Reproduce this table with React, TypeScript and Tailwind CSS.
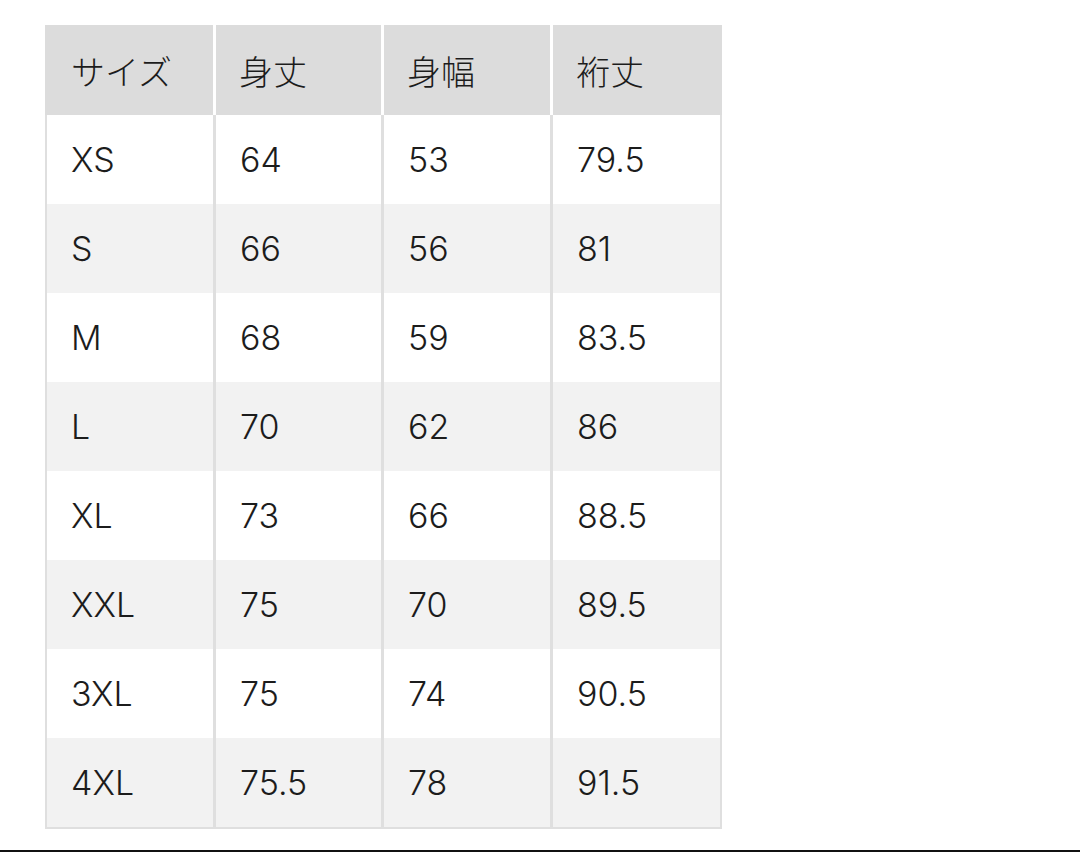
import React from "react";

const rows: string[][] = [
  ["XS", "64", "53", "79.5"],
  ["S", "66", "56", "81"],
  ["M", "68", "59", "83.5"],
  ["L", "70", "62", "86"],
  ["XL", "73", "66", "88.5"],
  ["XXL", "75", "70", "89.5"],
  ["3XL", "75", "74", "90.5"],
  ["4XL", "75.5", "78", "91.5"],
];

const headers = ["サイズ", "身丈", "身幅", "裄丈"];

export default function App() {
  return (
    <div
      className="h-[852px] w-[1080px] bg-white flex flex-col text-[#1c1c1c]"
      style={{ fontFamily: 'Inter, "Liberation Sans", "Noto Sans CJK JP", sans-serif' }}
    >
      <div className="pt-[25px] pl-[45px]">
        <div className="w-[677px]">
          {/* header */}
          <div className="grid grid-cols-[168px_165px_166px_169px] gap-x-[3px] bg-white">
            {headers.map((h, i) => (
              <div
                key={h}
                className={`h-[90px] bg-[#dcdcdc] flex items-center text-[34px] font-light ${i === 0 ? "pl-[26px]" : "pl-[23px]"}`}
                style={{ fontFamily: '"Noto Sans CJK JP", sans-serif' }}
              >
                {h}
              </div>
            ))}
          </div>

          {/* body */}
          <div className="bg-[#dfdfdf] px-[2px] pb-[2px]">
            {rows.map((r, ri) => (
              <div key={ri} className="grid grid-cols-[166px_165px_166px_167px] gap-x-[3px]">
                {r.map((c, ci) => (
                  <div
                    key={ci}
                    className={`h-[89px] flex items-center text-[34px] font-light pl-[24px] ${ri % 2 === 0 ? "bg-white" : "bg-[#f2f2f2]"}`}
                  >
                    {c}
                  </div>
                ))}
              </div>
            ))}
          </div>
        </div>
      </div>

      <div className="mt-auto h-[2px] w-full bg-[#111]" />
    </div>
  );
}
